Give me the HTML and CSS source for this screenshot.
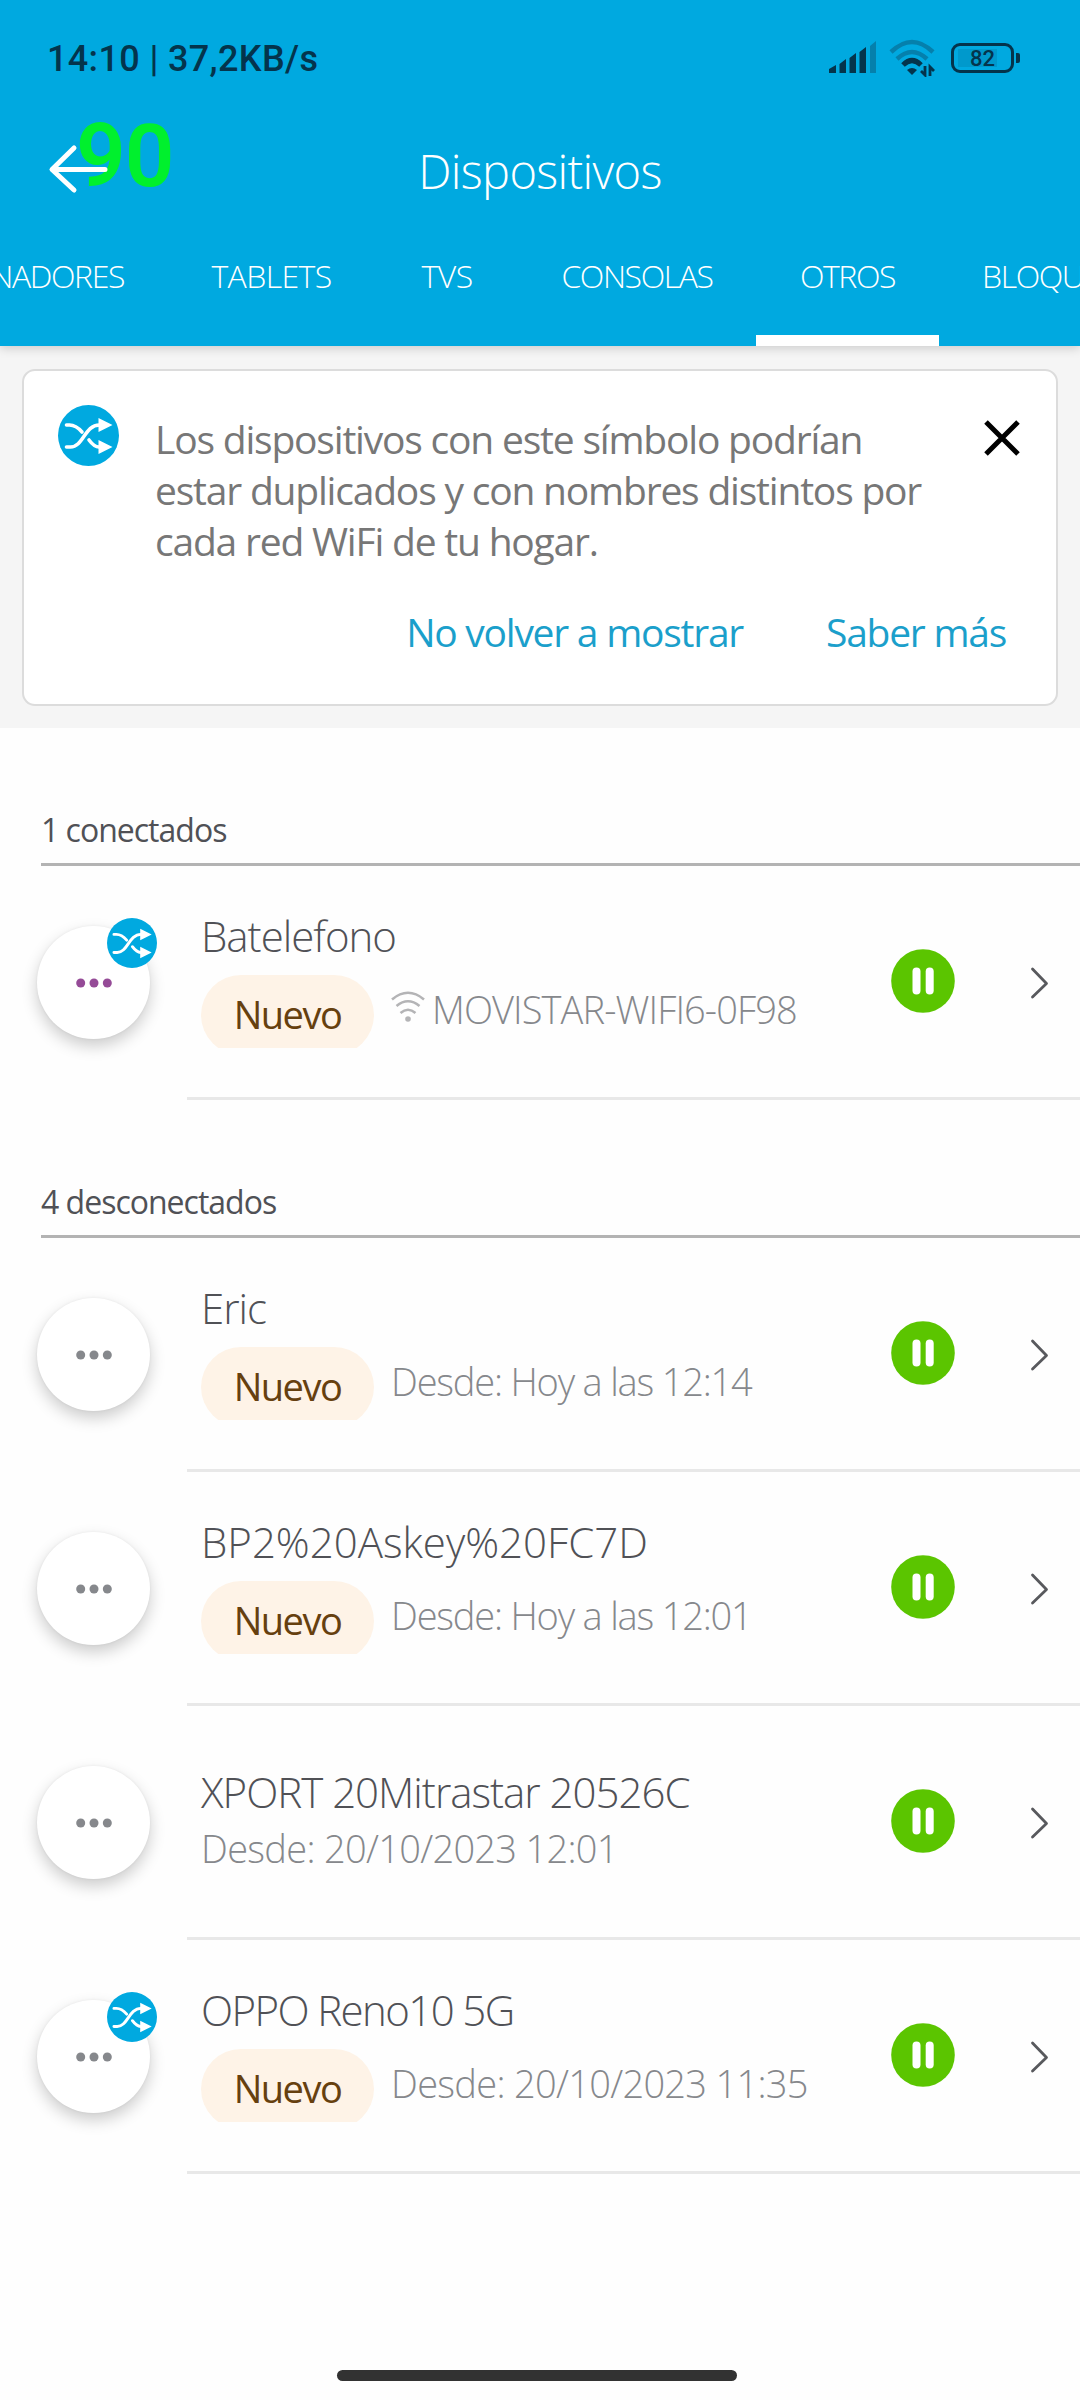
FILE: index.html
```html
<!DOCTYPE html>
<html lang="es">
<head>
  <meta charset="UTF-8" />
  <title>Dispositivos</title>
  <link rel="stylesheet" href="styles.css">
</head>
<body>
  <!-- shared icons -->
  <svg class="sprite" width="0" height="0">
    <symbol id="shuffle" viewBox="0 0 61 61">
      <circle cx="30.5" cy="30.5" r="30.5" fill="#00a9e0"/>
      <path d="M8.500 20h3c5 0 9 3 12.500 7M8.500 42h4c13 0 14-22 29-22M31 35c3 4 6 7 10 7" fill="none" stroke="#fff" stroke-width="3.600" stroke-linecap="round"/>
      <path d="M40.500 13l14 7-14 7zM40.500 35l14 7-14 7z" fill="#fff"/>
    </symbol>
    <symbol id="dots" viewBox="0 0 36 10">
      <circle cx="4.700" cy="5" r="4.500"/><circle cx="18" cy="5" r="4.500"/><circle cx="31.300" cy="5" r="4.500"/>
    </symbol>
    <symbol id="pause" viewBox="0 0 64 64">
      <circle cx="32" cy="32" r="31.800" fill="#5bc500"/>
      <rect x="21.500" y="18.500" width="8" height="27" rx="4" fill="#fff"/>
      <rect x="34.700" y="18.500" width="8" height="27" rx="4" fill="#fff"/>
    </symbol>
    <symbol id="chevron" viewBox="0 0 20 34">
      <path d="M3.500 3L17.500 17.500 3.500 31" fill="none" stroke="#58595d" stroke-width="2.800" stroke-linecap="round" stroke-linejoin="round"/>
    </symbol>
  </svg>

  <header class="header">
    <div class="status-bar">
      <span class="clock">14:10 | 37,2KB/s</span>
      <div class="status-icons">
        <svg width="48" height="34" viewBox="0 0 48 34">
          <path d="M0 28l7-4v8H0zM10.500 23l6.500-5v14h-6.500zM20.500 17l6.500-5v20h-6.500zM30.500 11l6.500-5v26h-6.500z" fill="#04344c"/>
          <path d="M41 5l6-5v32h-6z" fill="#0580ac"/>
        </svg>
        <svg class="wifi" width="48" height="38" viewBox="0 0 48 38">
          <g fill="none" stroke-width="4.500">
            <path d="M2 13Q23-7 44 13M8 20Q23 6 38 20" stroke="#0580ac"/>
            <path d="M14 26Q23 17 32 26" stroke="#04344c" stroke-width="5"/>
          </g>
          <path d="M18 31q5-4 10 0l-5 5z" fill="#04344c"/>
          <path d="M36 27v9l-4-4M41 37v-9l4 4" fill="none" stroke="#04344c" stroke-width="2.800"/>
        </svg>
        <div class="battery"><span>82</span></div>
      </div>
    </div>
    <div class="title-bar">
      <span class="fps">90</span>
      <svg class="back" width="60" height="50" viewBox="0 0 60 50">
        <path d="M26 4L4 25.500 26 46M5 25.500h52" fill="none" stroke="#fff" stroke-width="5" stroke-linecap="round" stroke-linejoin="round"/>
      </svg>
      <h1>Dispositivos</h1>
    </div>
    <nav class="tabs">
      <a class="tab t1"><span>ORDENADORES</span></a>
      <a class="tab t2"><span>TABLETS</span></a>
      <a class="tab t3"><span>TVS</span></a>
      <a class="tab t4"><span>CONSOLAS</span></a>
      <a class="tab t5 active"><span>OTROS</span></a>
      <a class="tab t6"><span>BLOQUEADOS</span></a>
    </nav>
  </header>

  <section class="notice-wrap">
    <div class="notice">
      <div class="notice-body">
        <svg class="notice-icon" width="61" height="61"><use href="#shuffle"/></svg>
        <p>Los dispositivos con este símbolo podrían<br>estar duplicados y con nombres distintos por<br>cada red WiFi de tu hogar.</p>
        <svg class="close" width="36" height="36" viewBox="0 0 36 36">
          <path d="M2 2l32 32M34 2L2 34" stroke="#000" stroke-width="5"/>
        </svg>
      </div>
      <div class="notice-actions">
        <a>No volver a mostrar</a>
        <a class="more">Saber más</a>
      </div>
    </div>
  </section>

  <main>
    <h2>1 conectados</h2>
    <div class="row">
      <div class="avatar on"><svg width="36" height="10"><use href="#dots"/></svg><svg class="badge" width="50" height="50"><use href="#shuffle"/></svg></div>
      <div class="info">
        <div class="name">Batelefono</div>
        <div class="detail">
          <span class="pill"><span>Nuevo</span></span>
          <svg class="ssid-icon" width="34" height="32" viewBox="0 0 34 32">
            <path d="M1 8.500Q17-5 33 8.500M5.500 15Q17 5.500 28.500 15M9.500 22Q17 15.500 24.500 22" fill="none" stroke="#b4b4b6" stroke-width="2.600"/>
            <circle cx="17" cy="28" r="2.800" fill="#b4b4b6"/>
          </svg>
          <span class="since ssid">MOVISTAR-WIFI6-0F98</span>
        </div>
      </div>
      <svg class="pause" width="64" height="64"><use href="#pause"/></svg>
      <svg class="chevron" width="20" height="34"><use href="#chevron"/></svg>
    </div>

    <h2>4 desconectados</h2>
    <div class="row">
      <div class="avatar"><svg width="36" height="10"><use href="#dots"/></svg></div>
      <div class="info">
        <div class="name">Eric</div>
        <div class="detail"><span class="pill"><span>Nuevo</span></span><span class="since">Desde: Hoy a las 12:14</span></div>
      </div>
      <svg class="pause" width="64" height="64"><use href="#pause"/></svg>
      <svg class="chevron" width="20" height="34"><use href="#chevron"/></svg>
    </div>
    <div class="row">
      <div class="avatar"><svg width="36" height="10"><use href="#dots"/></svg></div>
      <div class="info">
        <div class="name wide">BP2%20Askey%20FC7D</div>
        <div class="detail"><span class="pill"><span>Nuevo</span></span><span class="since">Desde: Hoy a las 12:01</span></div>
      </div>
      <svg class="pause" width="64" height="64"><use href="#pause"/></svg>
      <svg class="chevron" width="20" height="34"><use href="#chevron"/></svg>
    </div>
    <div class="row">
      <div class="avatar"><svg width="36" height="10"><use href="#dots"/></svg></div>
      <div class="info plain">
        <div class="name">XPORT 20Mitrastar 20526C</div>
        <div class="detail"><span class="since date">Desde: 20/10/2023 12:01</span></div>
      </div>
      <svg class="pause" width="64" height="64"><use href="#pause"/></svg>
      <svg class="chevron" width="20" height="34"><use href="#chevron"/></svg>
    </div>
    <div class="row">
      <div class="avatar"><svg width="36" height="10"><use href="#dots"/></svg><svg class="badge" width="50" height="50"><use href="#shuffle"/></svg></div>
      <div class="info">
        <div class="name tight">OPPO Reno10 5G</div>
        <div class="detail"><span class="pill"><span>Nuevo</span></span><span class="since date">Desde: 20/10/2023 11:35</span></div>
      </div>
      <svg class="pause" width="64" height="64"><use href="#pause"/></svg>
      <svg class="chevron" width="20" height="34"><use href="#chevron"/></svg>
    </div>
  </main>

  <footer class="nav-bar"><div class="handle"></div></footer>
</body>
</html>
```
FILE: styles.css
```css
* {
  box-sizing: border-box;
}
body {
  margin: 0;
  width: 1080px;
  height: 2400px;
  overflow: hidden;
  display: flex;
  flex-direction: column;
  background: #fefefe;
  font-family: "Open Sans", "Noto Sans", sans-serif;
  white-space: nowrap;
}
svg {
  display: block;
  flex: none;
}
.sprite {
  position: absolute;
}
h1, h2, p {
  margin: 0;
}

/* header */
.header {
  position: relative;
  height: 346px;
  flex: none;
  background: #00a9e0;
  color: #fff;
  box-shadow: 0 2px 10px rgba(0, 0, 0, 0.18);
}
.status-bar {
  height: 116px;
  padding: 0 66px 0 47px;
  display: flex;
  justify-content: space-between;
  align-items: center;
  color: #04344c;
  font-family: Roboto, sans-serif;
}
.clock {
  padding-top: 2px;
  font-size: 36px;
  font-weight: 500;
  letter-spacing: 0.35px;
}
.status-icons {
  display: flex;
  align-items: center;
}
.wifi {
  margin: 0 14px 0 12px;
}
.battery {
  position: relative;
  width: 63px;
  height: 30px;
  border: 3px solid #04344c;
  border-radius: 9px;
  display: flex;
  align-items: center;
  justify-content: center;
  background: linear-gradient(#0099cc, #0099cc) 4px 3px / 39px 18px no-repeat;
  font-size: 22px;
  font-weight: 500;
}
.battery::after {
  content: "";
  position: absolute;
  right: -9px;
  top: 7px;
  width: 4px;
  height: 10px;
  border-radius: 0 2px 2px 0;
  background: #04344c;
}
.title-bar {
  position: relative;
  height: 110px;
  display: flex;
  align-items: center;
  justify-content: center;
}
.title-bar h1 {
  font-size: 47px;
  font-weight: 300;
  line-height: 64px;
  letter-spacing: -0.65px;
}
.back {
  position: absolute;
  left: 48px;
  top: 28px;
}
.fps {
  position: absolute;
  left: 76px;
  top: -3px;
  color: #00f02d;
  font: 600 87px/86px Roboto, sans-serif;
  letter-spacing: -1px;
}
.tabs {
  height: 120px;
  display: flex;
  overflow: hidden;
}
.tab {
  flex: none;
  display: flex;
  justify-content: center;
  padding-top: 28px;
  font-size: 32px;
  line-height: 44px;
  font-weight: 300;
  letter-spacing: -1.4px;
}
.t1 { width: 167px; justify-content: flex-end; padding-right: 43px; }
.t2 { width: 209px; letter-spacing: -0.6px; }
.t3 { width: 142px; letter-spacing: -0.5px; }
.t4 { width: 238px; }
.t5 { width: 183px; }
.t6 { padding-left: 43px; }
.active {
  border-bottom: 11px solid #fff;
}

/* notice card */
.notice-wrap {
  height: 382px;
  flex: none;
  padding: 23px 22px 22px;
  background: #f5f5f5;
}
.notice {
  height: 337px;
  border: 2px solid #dcdcdc;
  border-radius: 13px;
  background: #fff;
}
.notice-body {
  height: 212px;
  display: flex;
  padding: 34px 36px 0 34px;
}
.notice-body p {
  flex: 1;
  margin: 8px 0 0 36px;
  font-size: 39px;
  line-height: 51px;
  letter-spacing: -1.2px;
  color: #777;
}
.close {
  margin-top: 15px;
}
.notice-actions {
  display: flex;
  justify-content: flex-end;
  padding: 22px 50px 0 0;
  font-size: 39px;
  line-height: 53px;
  letter-spacing: -1.25px;
  color: #1b9fcb;
}
.more {
  margin-left: 83px;
}

/* device list */
h2 {
  height: 138px;
  margin-left: 41px;
  padding-top: 80px;
  border-bottom: 3px solid #b3b3b3;
  font-size: 32px;
  line-height: 44px;
  font-weight: 400;
  letter-spacing: -1px;
  color: #505156;
}
.row {
  height: 234px;
  display: flex;
  padding-left: 37px;
  background: linear-gradient(#e8e8e8, #e8e8e8) 187px 231px / 893px 3px no-repeat;
}
.avatar {
  position: relative;
  flex: none;
  width: 113px;
  height: 113px;
  margin-top: 60px;
  border-radius: 50%;
  display: flex;
  align-items: center;
  justify-content: center;
  background: #fff;
  fill: #86888c;
  box-shadow: 0 7px 16px rgba(0, 0, 0, 0.2), 0 0 3px rgba(0, 0, 0, 0.06);
}
.avatar.on {
  fill: #954b97;
}
.badge {
  position: absolute;
  left: 70px;
  top: -8px;
}
.info {
  width: 690px;
  padding: 41px 0 0 51px;
}
.name {
  font-size: 42px;
  line-height: 58px;
  font-weight: 300;
  letter-spacing: -1px;
  color: #505156;
}
.wide {
  letter-spacing: 0;
}
.tight {
  letter-spacing: -1.6px;
}
.detail {
  display: flex;
  margin-top: 10px;
  color: #86888c;
}
.pill {
  width: 173px;
  height: 73px;
  overflow: hidden;
}
.pill span {
  display: block;
  height: 80px;
  border-radius: 40px;
  background: #fef3e7;
  color: #66400f;
  font-size: 38px;
  line-height: 78px;
  letter-spacing: -1.5px;
  text-align: center;
}
.since {
  margin-left: 17px;
  font-size: 38px;
  line-height: 68px;
  font-weight: 300;
  letter-spacing: -1.2px;
}
.date {
  letter-spacing: -0.7px;
}
.ssid-icon {
  margin: 16px 0 0 17px;
}
.ssid {
  margin-left: 7px;
  letter-spacing: -0.9px;
}
.plain {
  padding-top: 57px;
}
.plain .detail {
  margin-top: 0;
}
.plain .since {
  margin-left: 0;
  line-height: 54px;
}
.pause {
  margin: 83px 0 0 51px;
}
.chevron {
  margin: 100px 0 0 74px;
}

.nav-bar {
  flex: 1;
  display: flex;
  justify-content: center;
  align-items: flex-end;
  padding: 0 6px 19px 0;
}
.handle {
  width: 400px;
  height: 11px;
  border-radius: 6px;
  background: #323232;
}
```
